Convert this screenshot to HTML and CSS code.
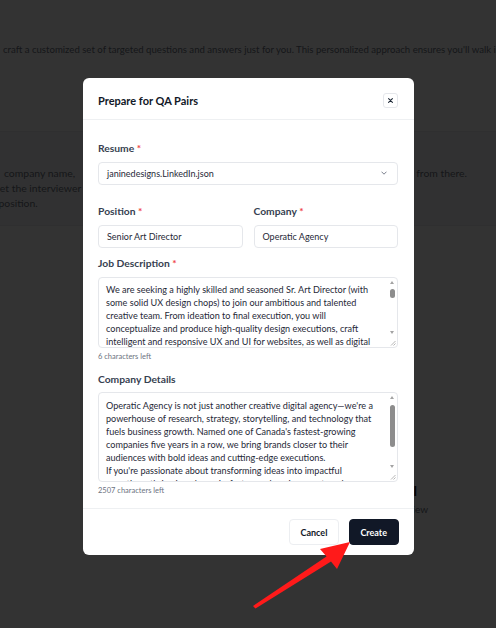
FILE: index.html
```html
<!DOCTYPE html>
<html lang="en">
<head>
    <meta charset="UTF-8">
    <meta name="viewport" content="width=device-width, initial-scale=1.0">
    <title>Prepare for QA Pairs</title>
    <link rel="stylesheet" href="styles.css">
</head>
<body>

    <!-- Page behind the dialog -->
    <main class="page">
        <p class="intro">craft a customized set of targeted questions and answers just for you. This personalized approach ensures you'll walk in</p>

        <section class="how">
            <p class="how-line first"><span>company name,</span><span>from there.</span></p>
            <p class="how-line second">get the interviewer</p>
            <p class="how-line third">position.</p>
        </section>

        <section class="steps">
            <h3>Tutorial</h3>
            <p>Interview</p>
        </section>
    </main>

    <!-- Dialog -->
    <div class="overlay">
        <div class="modal" role="dialog" aria-labelledby="modal-title">
            <header class="modal-header">
                <h2 class="modal-title" id="modal-title">Prepare for QA Pairs</h2>
                <button class="close-btn" aria-label="Close">
                    <svg width="5" height="5" viewBox="0 0 5 5"><path d="M0.6 0.6 L4.4 4.4 M4.4 0.6 L0.6 4.4" stroke="#1f2937" stroke-width="1.1" stroke-linecap="round"/></svg>
                </button>
            </header>

            <div class="modal-body">
                <div class="field field-resume">
                    <label>Resume <span class="req">*</span></label>
                    <div class="control select">
                        <span>janinedesigns.LinkedIn.json</span>
                        <svg width="6" height="4" viewBox="0 0 6 4"><path d="M0.5 0.7 L3 3.2 L5.5 0.7" fill="none" stroke="#6b7280" stroke-width="0.9"/></svg>
                    </div>
                </div>

                <div class="field-row">
                    <div class="field">
                        <label>Position <span class="req">*</span></label>
                        <div class="control">Senior Art Director</div>
                    </div>
                    <div class="field">
                        <label>Company <span class="req">*</span></label>
                        <div class="control">Operatic Agency</div>
                    </div>
                </div>

                <div class="field field-job">
                    <label>Job Description <span class="req">*</span></label>
                    <div class="textbox textbox-job">
                        <div class="textbox-text">
                            <p>We are seeking a highly skilled and seasoned Sr. Art Director (with</p>
                            <p>some solid UX design chops) to join our ambitious and talented</p>
                            <p>creative team. From ideation to final execution, you will</p>
                            <p>conceptualize and produce high-quality design executions, craft</p>
                            <p>intelligent and responsive UX and UI for websites, as well as digital</p>
                        </div>
                        <div class="scrollbar">
                            <span class="sb-btn up"></span>
                            <span class="sb-track"><span class="sb-thumb" style="margin-top: 2.5px; height: 9px;"></span></span>
                            <span class="sb-btn down"></span>
                            <span class="sb-corner">
                                <svg width="6" height="6" viewBox="0 0 6 6"><path d="M5.5 1 L1 5.5 M5.5 3.5 L3.5 5.5" stroke="#a3a3a3" stroke-width="0.8"/></svg>
                            </span>
                        </div>
                    </div>
                    <p class="hint">6 characters left</p>
                </div>

                <div class="field">
                    <label>Company Details</label>
                    <div class="textbox textbox-company">
                        <div class="textbox-text">
                            <p>Operatic Agency is not just another creative digital agency—we're a</p>
                            <p>powerhouse of research, strategy, storytelling, and technology that</p>
                            <p>fuels business growth. Named one of Canada's fastest-growing</p>
                            <p>companies five years in a row, we bring brands closer to their</p>
                            <p>audiences with bold ideas and cutting-edge executions.</p>
                            <p>If you're passionate about transforming ideas into impactful</p>
                            <p>narratives, thrive in a dynamic, fast-paced environment, and are</p>
                        </div>
                        <div class="scrollbar">
                            <span class="sb-btn up"></span>
                            <span class="sb-track"><span class="sb-thumb" style="margin-top: 3px; height: 42px;"></span></span>
                            <span class="sb-btn down"></span>
                            <span class="sb-corner">
                                <svg width="6" height="6" viewBox="0 0 6 6"><path d="M5.5 1 L1 5.5 M5.5 3.5 L3.5 5.5" stroke="#a3a3a3" stroke-width="0.8"/></svg>
                            </span>
                        </div>
                    </div>
                    <p class="hint">2507 characters left</p>
                </div>
            </div>

            <footer class="modal-footer">
                <button class="btn btn-secondary">Cancel</button>
                <button class="btn btn-primary">Create</button>
            </footer>
        </div>
    </div>

    <!-- Annotation arrow -->
    <svg class="annotation" width="496" height="628" viewBox="0 0 496 628">
        <polygon points="350,542 320,549 326.5,556.5 253,606 255.5,608.5 331,561.5 337,569" fill="#ff1a1a"/>
    </svg>

</body>
</html>
```

FILE: styles.css
```css
* {
    box-sizing: border-box;
}

body {
    font-family: Lato, "Open Sans", sans-serif;
    margin: 0;
    background-color: #fff;
    color: #6b7280;
}

p {
    margin: 0;
}

/* page behind the dialog */
.page {
    height: 628px;
    overflow: hidden;
    display: flex;
    flex-direction: column;
}

.intro {
    margin: 41.5px 0 0 3px;
    white-space: nowrap;
    font-size: 9.6px;
    line-height: 15px;
}

.how {
    margin-top: 74.5px;
    padding: 33.5px 0 14.5px;
    background-color: #f6f6f7;
    border-top: 1px solid #ececee;
    border-bottom: 1px solid #ececee;
}

.how-line {
    white-space: nowrap;
    font-size: 10.4px;
    line-height: 15px;
}

.how-line.first {
    display: flex;
    justify-content: space-between;
    padding: 0 29px 0 4px;
}

.how-line.second {
    margin-left: -5.5px;
}

.how-line.third {
    margin-left: -1.5px;
}

.steps {
    margin-top: 256px;
    display: flex;
    flex-direction: column;
    align-items: flex-end;
}

.steps h3 {
    margin: 0 79px 0 0;
    font-size: 14px;
    line-height: 17px;
    color: #111;
}

.steps p {
    margin: 3px 68px 0 0;
    font-size: 10px;
    line-height: 15px;
}

/* dialog */
.overlay {
    position: fixed;
    top: 0;
    left: 0;
    width: 100%;
    height: 100%;
    padding-top: 5px;
    background-color: rgba(0, 0, 0, 0.8);
    display: flex;
    justify-content: center;
    align-items: center;
}

.modal {
    width: 331px;
    background-color: #fff;
    border-radius: 6px;
}

.modal-header {
    display: flex;
    align-items: center;
    justify-content: space-between;
    padding: 15px 16px 11px 15.5px;
    border-bottom: 1px solid #eef0f2;
}

.modal-title {
    margin: 0;
    font-size: 11px;
    line-height: 15px;
    font-weight: 700;
    color: #111827;
}

.close-btn {
    width: 15px;
    height: 15px;
    padding: 0;
    border: 1px solid #e5e7eb;
    border-radius: 3px;
    background-color: #fff;
    display: flex;
    align-items: center;
    justify-content: center;
}

.modal-body {
    padding: 22px 15.5px 12px;
}

.field label {
    display: block;
    margin-bottom: 6.5px;
    font-size: 10.3px;
    line-height: 13px;
    font-weight: 700;
    color: #374151;
}

.req {
    color: #ef4444;
}

.field-resume {
    margin-bottom: 20.5px;
}

.field-row {
    display: grid;
    grid-template-columns: 1fr 1fr;
    gap: 11px;
    margin-bottom: 9.5px;
}

.field-job {
    margin-bottom: 11px;
}

.control {
    height: 23px;
    padding: 0 10px 0 8px;
    border: 1px solid #e5e7eb;
    border-radius: 4px;
    display: flex;
    align-items: center;
    justify-content: space-between;
    font-size: 9px;
    color: #1f2937;
}

.textbox {
    display: flex;
    border: 1px solid #e5e7eb;
    border-radius: 4px;
    overflow: hidden;
}

.textbox-job {
    height: 71px;
}

.textbox-company {
    height: 89.5px;
}

.textbox-text {
    flex: 1;
    padding: 5.5px 0 0 7px;
    overflow: hidden;
    font-size: 9.1px;
    line-height: 13px;
    color: #1f2937;
}

.textbox-text p {
    white-space: nowrap;
}

.scrollbar {
    width: 10px;
    display: flex;
    flex-direction: column;
    align-items: center;
}

.sb-btn {
    height: 9px;
    display: flex;
    align-items: center;
    justify-content: center;
}

.sb-btn::before {
    content: "";
    border-left: 2.5px solid transparent;
    border-right: 2.5px solid transparent;
}

.sb-btn.up::before {
    border-bottom: 3px solid #a3a3a3;
}

.sb-btn.down::before {
    border-top: 3px solid #a3a3a3;
}

.sb-track {
    flex: 1;
    display: flex;
    flex-direction: column;
}

.sb-thumb {
    width: 5px;
    border-radius: 3px;
    background-color: #8d8d8d;
}

.sb-corner {
    height: 10px;
    width: 100%;
    display: flex;
    align-items: flex-end;
    justify-content: flex-end;
    padding: 0 1px 1px 0;
}

.hint {
    margin-top: 4px;
    font-size: 7.5px;
    line-height: 10px;
    color: #6b7280;
}

.modal-footer {
    display: flex;
    justify-content: flex-end;
    gap: 10px;
    padding: 10.5px 15px 10px;
    border-top: 1px solid #eef0f2;
}

.btn {
    height: 26px;
    padding: 0 10.5px;
    border-radius: 4px;
    font-family: inherit;
    font-size: 9px;
    font-weight: 700;
}

.btn-secondary {
    background-color: #fff;
    border: 1px solid #eceef1;
    color: #111827;
}

.btn-primary {
    background-color: #111827;
    border: 1px solid #111827;
    color: #fff;
}

/* red arrow drawn over the screenshot */
.annotation {
    position: fixed;
    top: 0;
    left: 0;
    pointer-events: none;
}
```
